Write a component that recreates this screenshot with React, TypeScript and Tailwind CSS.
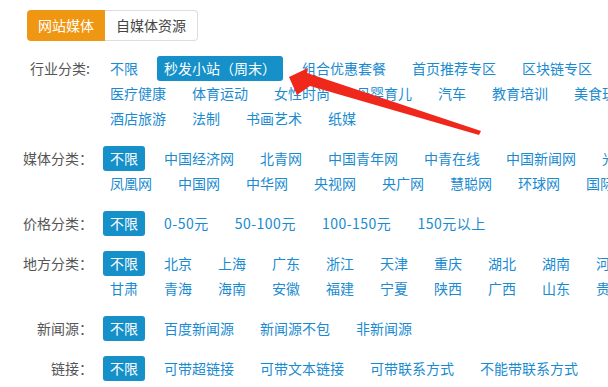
const groups: { label: string; digits?: boolean; lines: { text: string; active?: boolean }[][] }[] = [
  {
    label: '行业分类:\u00a0',
    lines: [
      [
        { text: '不限' },
        { text: '秒发小站（周末）', active: true },
        { text: '组合优惠套餐' },
        { text: '首页推荐专区' },
        { text: '区块链专区' },
      ],
      ['医疗健康', '体育运动', '女性时尚', '母婴育儿', '汽车', '教育培训', '美食玩乐'].map((t) => ({ text: t })),
      ['酒店旅游', '法制', '书画艺术', '纸媒'].map((t) => ({ text: t })),
    ],
  },
  {
    label: '媒体分类：',
    lines: [
      [{ text: '不限', active: true }, ...['中国经济网', '北青网', '中国青年网', '中青在线', '中国新闻网', '光明网'].map((t) => ({ text: t }))],
      ['凤凰网', '中国网', '中华网', '央视网', '央广网', '慧聪网', '环球网', '国际在线'].map((t) => ({ text: t })),
    ],
  },
  {
    label: '价格分类：',
    digits: true,
    lines: [[{ text: '不限', active: true }, ...['0-50元', '50-100元', '100-150元', '150元以上'].map((t) => ({ text: t }))]],
  },
  {
    label: '地方分类：',
    lines: [
      [{ text: '不限', active: true }, ...['北京', '上海', '广东', '浙江', '天津', '重庆', '湖北', '湖南', '河北'].map((t) => ({ text: t }))],
      ['甘肃', '青海', '海南', '安徽', '福建', '宁夏', '陕西', '广西', '山东', '贵州'].map((t) => ({ text: t })),
    ],
  },
  {
    label: '新闻源：',
    lines: [[{ text: '不限', active: true }, ...['百度新闻源', '新闻源不包', '非新闻源'].map((t) => ({ text: t }))]],
  },
  {
    label: '链接：',
    lines: [[{ text: '不限', active: true }, ...['可带超链接', '可带文本链接', '可带联系方式', '不能带联系方式'].map((t) => ({ text: t }))]],
  },
];

function Arrow() {
  // red annotation arrow pointing at the active tag
  return (
    <svg className="absolute left-0 top-0 pointer-events-none" width="608" height="387">
      <polygon points="289,77 308,68 307,73 481,131 479,135 310,86 297,95" fill="#f0281c" />
    </svg>
  );
}

export default function App() {
  return (
    <div
      className="relative w-[608px] h-[387px] overflow-hidden bg-white text-[14px]"
      style={{ fontFamily: '"Noto Sans CJK SC", "Microsoft YaHei", sans-serif' }}
    >
      {/* Tabs */}
      <div className="flex ml-[27px] mt-[10px] h-[31px]">
        <div className="px-[11px] leading-[31px] bg-[#ef9612] text-white rounded-l-[4px]">网站媒体</div>
        <div className="px-[11px] leading-[29px] border border-l-0 border-[#dddddd] text-[#444] rounded-r-[4px]">
          自媒体资源
        </div>
      </div>

      {/* Filters */}
      <div className="mt-[15px]">
        {groups.map((g) => (
          <div key={g.label} className="flex mb-[15px]">
            <div className="w-[93px] shrink-0 text-right text-[#555] leading-[25px] whitespace-nowrap">{g.label}</div>
            <div className="ml-[10px]">
              {g.lines.map((line, i) => (
                <div key={i} className="flex whitespace-nowrap h-[25px]">
                  {line.map((it) => (
                    <span
                      key={it.text}
                      className={
                        it.active
                          ? 'shrink-0 mr-[12px] px-[7px] h-[25px] leading-[25px] rounded-[3px] bg-[#1590c9] text-white'
                          : g.digits
                            ? 'shrink-0 mr-[12px] px-[7px] h-[25px] leading-[25px] text-[#1a8bd0] tracking-[0.5px]'
                            : 'shrink-0 mr-[12px] px-[7px] h-[25px] leading-[25px] text-[#1a8bd0]'
                      }
                    >
                      {it.text}
                    </span>
                  ))}
                </div>
              ))}
            </div>
          </div>
        ))}
      </div>

      <Arrow />
    </div>
  );
}
